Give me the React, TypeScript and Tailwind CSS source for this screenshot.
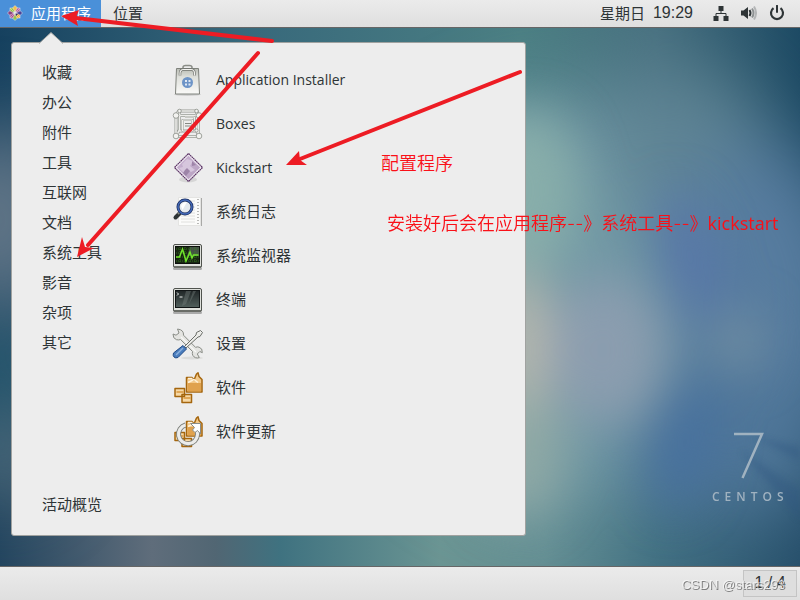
import React from 'react';

const categories = ['收藏', '办公', '附件', '工具', '互联网', '文档', '系统工具', '影音', '杂项', '其它'];

const CentosMark = () => (
  <svg width="16" height="16" viewBox="0 0 32 32" aria-hidden="true">
    <g stroke="#f3eef5" strokeWidth="1">
      <rect x="6" y="6" width="9.5" height="9.5" fill="#8fbf3c" />
      <rect x="16.5" y="6" width="9.5" height="9.5" fill="#b55a9c" />
      <rect x="6" y="16.5" width="9.5" height="9.5" fill="#b04a8c" />
      <rect x="16.5" y="16.5" width="9.5" height="9.5" fill="#f0b030" />
      <path d="M16 1l4.500 4.500L16 14l-4.500-8.500z" fill="#f3c14b" />
      <path d="M31 16l-4.500 4.500L18 16l8.500-4.500z" fill="#4a4496" />
      <path d="M16 31l-4.500-4.500L16 18l4.500 8.500z" fill="#9ac24c" />
      <path d="M1 16l4.500-4.500L14 16l-8.500 4.500z" fill="#8a3f7e" />
    </g>
    <path d="M7 7l18 18M25 7L7 25" stroke="#f5f0f5" strokeWidth="1" />
    <path d="M17 17l5 1-4 4z" fill="#2f2b6e" />
  </svg>
);

const NetworkIcon = () => (
  <svg width="16" height="16" viewBox="0 0 16 16" aria-hidden="true">
    <path d="M5.500 1h5v5h-5zM.5 11h5v5h-5zM10.500 11h5v5h-5z" fill="#2e3436" />
    <path d="M8 5v3.500M3 11.500v-3h10v3" fill="none" stroke="#2e3436" />
  </svg>
);

const VolumeIcon = () => (
  <svg width="16" height="16" viewBox="0 0 16 16" aria-hidden="true">
    <path d="M0 5.500h2.500L7 2v12l-4.500-3.500H0z" fill="#2e3436" />
    <path d="M8.500 5q2 3 0 6" fill="none" stroke="#2e3436" strokeWidth="2" />
    <path d="M11 3.500q3 4.500 0 9" fill="none" stroke="#8d9192" strokeWidth="2" />
    <path d="M13 1.500q4 6.500 0 13" fill="none" stroke="#b4b6b7" strokeWidth="2" />
  </svg>
);

const PowerIcon = () => (
  <svg width="16" height="16" viewBox="0 0 16 16" aria-hidden="true">
    <path d="M4.500 3.200a6 6 0 1 0 7 0" fill="none" stroke="#2e3436" strokeWidth="2.200" />
    <path d="M8 .8v6.200" stroke="#2e3436" strokeWidth="2" strokeLinecap="round" />
  </svg>
);

const InstallerIcon = () => (
  <svg width="32" height="32" viewBox="0 0 32 32" aria-hidden="true">
    <defs>
      <linearGradient id="bag" x1="0" y1="0" x2="0" y2="1">
        <stop offset="0" stopColor="#b9bcb4" />
        <stop offset=".35" stopColor="#dfe1dc" />
        <stop offset="1" stopColor="#fafaf8" />
      </linearGradient>
    </defs>
    <ellipse cx="15.500" cy="30.500" rx="13.500" ry="1.500" fill="#cfcfcf" />
    <path d="M4.500 4.500h22l1 25.500h-24z" fill="url(#bag)" stroke="#7f827c" />
    <path d="M11 6V3.500q0-2 2.500-2h4q2.500 0 2.500 2V6" fill="none" stroke="#8b8e88" strokeWidth="1.500" />
    <path d="M8 11.500V9.500q0-4 3.500-4h7.500q3.500 0 3.500 4v2" fill="none" stroke="#70736d" strokeWidth="2.500" />
    <path d="M8 11.500V9.500q0-4 3.500-4h7.500q3.500 0 3.500 4v2" fill="none" stroke="#f2f2ef" strokeWidth="1.200" />
    <circle cx="15.500" cy="18.500" r="5.500" fill="#6d94c7" />
    <path d="M13 16h2v2h-2zM16.500 16h2v2h-2zM13 19.500h2v2h-2zM16.500 19.500h2v2h-2z" fill="#dfe8f3" />
  </svg>
);

const BoxesIcon = () => (
  <svg width="32" height="32" viewBox="0 0 32 32" aria-hidden="true">
    <g fill="none" strokeLinejoin="round">
      <path d="M7.500 3h17v20h-17zM4 7.500h22.500v21H4zM4 7l3-4.500M26 7l-1-4.500M4 29l3-6.500M26 29l-1-6.500" stroke="#999c96" strokeWidth="3" />
      <path d="M7.500 3h17v20h-17zM4 7.500h22.500v21H4zM4 7l3-4.500M26 7l-1-4.500M4 29l3-6.500M26 29l-1-6.500" stroke="#ededea" strokeWidth="1.600" />
      <path d="M10.500 12h10v11h-10zM13 9h9.500v12" stroke="#a2a59f" strokeWidth="2.200" />
      <path d="M10.500 12h10v11h-10zM13 9h9.500v12" stroke="#efefeb" />
      <path d="M13 15.500h6M13 18h6" stroke="#858882" />
    </g>
    <g fill="#f3f3f0" stroke="#8c8f89" strokeWidth=".8">
      <circle cx="7.500" cy="3" r="1.800" />
      <circle cx="24.500" cy="3" r="1.800" />
      <circle cx="4" cy="7.500" r="2.800" />
      <circle cx="27" cy="7.500" r="2.800" />
      <circle cx="4" cy="28" r="2.800" />
      <circle cx="27" cy="28" r="2.800" />
      <circle cx="24.500" cy="22.500" r="1.600" />
    </g>
  </svg>
);

const KickstartIcon = () => (
  <svg width="32" height="32" viewBox="0 0 32 32" aria-hidden="true">
    <defs>
      <linearGradient id="kick" x1="0" y1="0" x2="1" y2="1">
        <stop offset="0" stopColor="#c9b3d2" />
        <stop offset="1" stopColor="#b7a0c0" />
      </linearGradient>
    </defs>
    <ellipse cx="16" cy="27.500" rx="9" ry="3" fill="#d6d6d6" />
    <path d="M16.500 1.500L30.500 15.500 16.500 29.500 2.500 15.500z" fill="#f4eef6" stroke="#5c3566" strokeWidth="1.200" strokeDasharray="1.800 .4" />
    <path d="M16.500 3.800L28.200 15.500l-11.700 11.700L4.800 15.500z" fill="url(#kick)" />
    <path d="M10 12l5-5 6 2-3 5 5 4-4 2-4-3-3 4-5-5 4-1z" fill="#d6c6dd" />
    <path d="M15 16l3 3-4 5-3-3 2-3zM20 9l4 4-4 1z" fill="#9d84a8" />
  </svg>
);

const LogIcon = () => (
  <svg width="32" height="32" viewBox="0 0 32 32" aria-hidden="true">
    <path d="M6.500 1.500h22v28h-22z" fill="#fbfbfa" stroke="#e4e4e2" />
    <path d="M29.500 2v28" stroke="#a9a9a7" />
    <path d="M9 5h14M9 8h14M9 11h14M9 14h14M9 17h14M9 20h14M9 23h14M9 26h14" stroke="#e0e0de" />
    <path d="M26 3v26" stroke="#b9b9b7" strokeWidth="2" strokeDasharray="1 2" />
    <path d="M3.500 21.500l4-4" stroke="#2e3436" strokeWidth="4" strokeLinecap="round" />
    <path d="M6 18l3-3" stroke="#888a85" strokeWidth="2" />
    <circle cx="13" cy="11" r="7" fill="#e4e9ee" stroke="#1b2c5c" strokeWidth="3" />
    <circle cx="13" cy="11" r="7" fill="none" stroke="#4369b8" strokeWidth="1.500" />
    <path d="M9 10q1.500-4 6-4l-4.500 8z" fill="#fff" />
  </svg>
);

const Screen = ({ children }: { children: React.ReactNode }) => (
  <svg width="32" height="32" viewBox="0 0 32 32" aria-hidden="true">
    <defs>
      <linearGradient id="glass" x1="0" y1="0" x2="0" y2="1">
        <stop offset="0" stopColor="#1f2526" />
        <stop offset="1" stopColor="#52605c" />
      </linearGradient>
    </defs>
    <rect x="1" y="27" width="29" height="3" rx="1.500" fill="#aaa" />
    <rect x="1.500" y="4.500" width="28" height="23" rx="1.500" fill="#dfe1dc" stroke="#50534e" />
    <path d="M2 27h27" stroke="#6a6d67" strokeWidth="2" />
    {children}
  </svg>
);

const MonitorIcon = () => (
  <Screen>
    <rect x="3.500" y="6.500" width="24" height="17" fill="#182612" stroke="#0c0f0c" />
    <path d="M18 7h9v9l-12 0z" fill="#445046" />
    <path d="M4 9h23M4 13h23M4 17h23M4 21h23M8 7v16M13 7v16M18 7v16M23 7v16" stroke="#3d8a22" strokeDasharray="1 1" opacity=".7" />
    <path d="M4 17h3.500l3-8 3.500 12 4-9 2 6 1.500-3h5" fill="none" stroke="#71e52c" strokeWidth="1.500" />
  </Screen>
);

const TerminalIcon = () => (
  <Screen>
    <rect x="3.500" y="6.500" width="24" height="17" fill="url(#glass)" stroke="#111516" />
    <path d="M14 7h5l-5 13-4 2zM21 7h3l-7 13z" fill="#77827f" opacity=".4" />
    <path d="M5 8.500L6.500 10 5 11.500M7.500 13h3" fill="none" stroke="#f0f2f0" />
  </Screen>
);

const SettingsIcon = () => (
  <svg width="32" height="32" viewBox="0 0 32 32" aria-hidden="true">
    <ellipse cx="20" cy="30" rx="11" ry="1.500" fill="#dcdcda" />
    <path d="M5.500 1l1.500 4-3 2.200-3-1.200q-.2 4.500 3.500 5.700 2.300.6 4-.2l12 12q-1 4.500 3 6.200 2.200.7 3.800-.2l-2-3.500 2.500-2.500 2.500 1.200q.4-4.500-3.200-5.500-2-.8-3.500.2L11.500 7.200q.5-5.400-6-6.200z" fill="#e4e4e1" stroke="#8a8d87" />
    <path d="M9 9l15 15" stroke="#f8f8f6" strokeWidth="1.200" />
    <path d="M28.500 2.500l2 2-2.500 4-2 .5L14 20l-1.500-1.500L24 7l.5-2.500z" fill="#ecece9" stroke="#6a6d68" />
    <path d="M11 17.500l3.500 3.500L6 29.500q-2.500 1-4-.5t-.5-4z" fill="#4a7dbd" stroke="#204a87" />
    <path d="M11 20L4 27" stroke="#8db1de" strokeWidth="1.500" />
  </svg>
);

const PackageShapes = () => (
  <g strokeLinejoin="round">
    <path d="M14.500 5.500h5.500l2 2.500 2.500-6L26 .8l1 3.700 3 3V20H14.500z" fill="#f3c98a" stroke="#a5660e" strokeWidth="1.500" />
    <path d="M15.500 11h13.500v8.500H15.500z" fill="#e0a24e" />
    <path d="M16 6.500h4.500M16 10.500l6-3 4 3" fill="none" stroke="#fff2d9" strokeWidth="1.500" />
    <path d="M3 16.500h9.500v8H3zM10 22.500h9.500v8H10z" fill="#f7d9a6" stroke="#a5660e" strokeWidth="1.500" />
    <path d="M4.500 20h7M11.500 26h7" stroke="#d9983f" strokeWidth="1.500" />
  </g>
);

const SoftwareIcon = () => (
  <svg width="32" height="32" viewBox="0 0 32 32" aria-hidden="true">
    <PackageShapes />
  </svg>
);

const UpdateIcon = () => (
  <svg width="32" height="32" viewBox="0 0 32 32" aria-hidden="true">
    <PackageShapes />
    <path d="M13.500 9a9.500 9.500 0 1 0 12 9.500V14" fill="none" stroke="#7c7f7a" strokeWidth="5" />
    <path d="M13.500 9a9.500 9.500 0 1 0 12 9.500V13" fill="none" stroke="#ececea" strokeWidth="3.200" />
    <path d="M18.500 7.500h10v10.500l-3-3.500-2.500 2-2.500-2.500 2-2.500z" fill="#fff" stroke="#8a8d88" />
  </svg>
);

const programs = [
  { name: 'Application Installer', Icon: InstallerIcon },
  { name: 'Boxes', Icon: BoxesIcon },
  { name: 'Kickstart', Icon: KickstartIcon },
  { name: '系统日志', Icon: LogIcon },
  { name: '系统监视器', Icon: MonitorIcon },
  { name: '终端', Icon: TerminalIcon },
  { name: '设置', Icon: SettingsIcon },
  { name: '软件', Icon: SoftwareIcon },
  { name: '软件更新', Icon: UpdateIcon },
];

const Wallpaper = () => (
  <svg className="absolute inset-0 h-full w-full" viewBox="0 28 800 538" preserveAspectRatio="none" aria-hidden="true">
    <defs>
      <linearGradient id="sky" x1="0" y1="0" x2="1" y2="0">
        <stop offset="0" stopColor="#16415f" />
        <stop offset=".3" stopColor="#37687b" />
        <stop offset=".65" stopColor="#4b7f83" />
        <stop offset=".82" stopColor="#47707f" />
        <stop offset="1" stopColor="#1d4a64" />
      </linearGradient>
      <linearGradient id="floor" x1="0" y1="0" x2="1" y2="0">
        <stop offset="0" stopColor="#23455f" />
        <stop offset=".19" stopColor="#5f6d7b" />
        <stop offset=".27" stopColor="#516673" />
        <stop offset=".35" stopColor="#3f7280" />
        <stop offset=".55" stopColor="#6b9593" />
        <stop offset=".68" stopColor="#648f93" />
        <stop offset=".82" stopColor="#427182" />
        <stop offset="1" stopColor="#27506b" />
      </linearGradient>
      <linearGradient id="fade" x1="0" y1="0" x2="0" y2="1">
        <stop offset=".45" stopColor="#000" />
        <stop offset=".85" stopColor="#fff" />
      </linearGradient>
      <mask id="lower">
        <rect y="28" width="800" height="538" fill="url(#fade)" />
      </mask>
      <filter id="soft" x="-150%" y="-60%" width="400%" height="220%" colorInterpolationFilters="sRGB">
        <feGaussianBlur stdDeviation="24" />
      </filter>
      <filter id="softer" x="-60%" y="-60%" width="220%" height="220%" colorInterpolationFilters="sRGB">
        <feGaussianBlur stdDeviation="38" />
      </filter>
      <filter id="thin" x="-30%" y="-30%" width="160%" height="160%">
        <feGaussianBlur stdDeviation="3" />
      </filter>
    </defs>
    <rect y="28" width="800" height="538" fill="url(#sky)" />
    <rect y="28" width="800" height="538" fill="url(#floor)" mask="url(#lower)" />
    <g filter="url(#softer)">
      <ellipse cx="560" cy="300" rx="190" ry="205" fill="#7299a5" />
      <ellipse cx="690" cy="150" rx="100" ry="75" fill="#5f8494" transform="rotate(40 690 150)" />
      <ellipse cx="760" cy="310" rx="100" ry="170" fill="#577c9f" />
      <ellipse cx="730" cy="440" rx="100" ry="80" fill="#4f7699" />
      <ellipse cx="0" cy="220" rx="60" ry="100" fill="#66798a" />
      <ellipse cx="0" cy="370" rx="40" ry="30" fill="#2c6a7c" />
      <ellipse cx="0" cy="455" rx="50" ry="40" fill="#587583" />
    </g>
    <g filter="url(#soft)">
      <ellipse cx="525" cy="190" rx="55" ry="80" fill="#88aeaa" />
      <ellipse cx="520" cy="450" rx="45" ry="70" fill="#8fa9a5" />
      <ellipse cx="605" cy="350" rx="60" ry="75" fill="#8b9daf" />
      <ellipse cx="690" cy="255" rx="20" ry="65" fill="#5674aa" transform="rotate(-16 690 255)" />
      <ellipse cx="685" cy="445" rx="22" ry="65" fill="#456f9f" transform="rotate(14 685 445)" />
      <ellipse cx="522" cy="340" rx="26" ry="75" fill="#bcbbae" />
      <ellipse cx="738" cy="342" rx="24" ry="30" fill="#7390a2" />
    </g>
    <g filter="url(#thin)" fill="#2f5580" opacity=".35">
      <path d="M755 437l45 10v14z" />
      <path d="M740 450l60 40v30z" />
    </g>
  </svg>
);

const Arrows = () => (
  <svg className="pointer-events-none absolute left-0 top-0" width="540" height="280" aria-hidden="true">
    <g stroke="#ed1c24" strokeWidth="4" strokeLinecap="round">
      <path d="M272 41L76 18" />
      <path d="M258 53L88 245" />
      <path d="M520 72L300 159" />
    </g>
    <g fill="#ed1c24">
      <path d="M61 16l18-6-3 8 2 8z" />
      <path d="M77 257l5-20 3 10 9 1z" />
      <path d="M286 165l13-14 1 9 7 5z" />
    </g>
  </svg>
);

const App = () => {
  return (
    <div className="relative flex min-h-screen flex-col overflow-hidden bg-[#16415f] font-['Open_Sans','Noto_Sans_CJK_SC',sans-serif] text-[15px] leading-5 text-[#2e3436]">
      <header className="flex h-7 items-stretch border-b border-[#666] bg-linear-to-b from-[#ebebeb] to-[#dfdfdf]">
        <button className="flex items-center gap-2 bg-[#4a90d9] pb-0.5 pl-[7px] pr-2.5 text-white">
          <CentosMark />
          应用程序
        </button>
        <button className="px-3 pb-0.5">位置</button>
        <div className="ml-auto flex items-center gap-3 pb-0.5 pr-[15px]">
          <time className="mr-2 flex items-center gap-2">
            星期日
            <span className="font-['Liberation_Sans',sans-serif] text-base leading-5">19:29</span>
          </time>
          <NetworkIcon />
          <VolumeIcon />
          <PowerIcon />
        </div>
      </header>

      <main className="relative flex flex-1 flex-col">
        <Wallpaper />
        <div className="relative mb-6 ml-[11px] mt-3.5 w-[515px] rounded-[3px] border border-[#a0a2a0] bg-[#ededed] pb-[15px] pl-[30px] pt-[15px]">
          <svg className="absolute -top-[11px] left-[26px]" width="26" height="12" aria-hidden="true">
            <path d="M1 11.500L13 .5l12 11" fill="#ededed" stroke="#a0a2a0" />
          </svg>
          <div className="flex">
            <ul className="w-[130px]">
              {categories.map((name) => (
                <li key={name}>
                  <button className="block h-[30px] pb-0.5">{name}</button>
                </li>
              ))}
            </ul>
            <ul>
              {programs.map(({ name, Icon }) => (
                <li key={name}>
                  <button className="flex h-11 items-center gap-3">
                    <Icon />
                    <span className={/^[A-Z]/.test(name) ? 'text-sm' : 'pb-0.5'}>{name}</span>
                  </button>
                </li>
              ))}
            </ul>
          </div>
          <button className="mt-9 block h-[30px] pb-0.5">活动概览</button>
        </div>
        <svg className="absolute bottom-[62px] right-[10px]" width="80" height="74" viewBox="0 0 80 74" role="img" aria-label="CentOS 7">
          <path d="M24 4h28L32.500 48" fill="none" stroke="#a0b2c0" strokeWidth="2.500" />
          <text x="2" y="71" fontFamily="Open Sans" fontSize="12" fontWeight="600" fill="#a0b2c0" letterSpacing="5">CENTOS</text>
        </svg>
      </main>

      <footer className="flex h-[34px] items-center justify-end border-t border-[#666] bg-linear-to-b from-[#ebebeb] to-[#dfdfdf] pr-[3px]">
        <button className="h-[27px] w-[54px] border border-[#c4c4c4] bg-[#dedede] pb-0.5 font-['Liberation_Sans',sans-serif] text-base leading-5">1 / 4</button>
      </footer>

      <p className="absolute left-[381px] top-[151px] text-lg font-[350] leading-6 text-[#fa1018]">配置程序</p>
      <p className="absolute left-[387px] top-[211px] whitespace-nowrap text-lg font-[350] leading-6 text-[#fa1018]">
        安装好后会在应用程序<span className="font-['Inter']">--</span>》系统工具<span className="font-['Inter']">--</span>》
        <span className="font-normal">kickstart</span>
      </p>
      <Arrows />
      <p className="absolute bottom-[5px] right-[15px] font-['Liberation_Sans',sans-serif] text-[13px] leading-5 text-white/60 [text-shadow:1px_1px_0_#7f7f7f]">
        CSDN @stars293
      </p>
    </div>
  );
};

export default App;
